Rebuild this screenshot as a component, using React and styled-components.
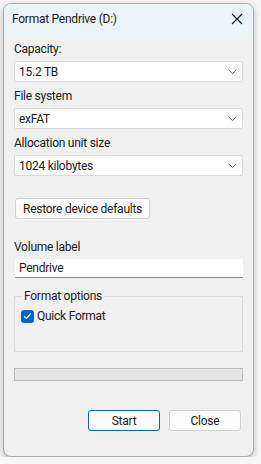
import React from "react";
import styled, { createGlobalStyle } from "styled-components";

const GlobalStyle = createGlobalStyle`
  html, body {
    margin: 0;
    padding: 0;
    background: #f7f7f7;
  }
  body {
    font-family: Roboto, "Noto Sans", sans-serif;
    font-size: 12px;
    letter-spacing: -0.25px;
    color: #1a1a1a;
  }
`;

const Chevron = () => (
  <svg width="9" height="6" viewBox="0 0 9 6" fill="none">
    <path d="M0.8 1 L4.5 4.6 L8.2 1" stroke="#5f5f5f" strokeWidth="1" />
  </svg>
);

const CloseIcon = () => (
  <svg width="12" height="12" viewBox="0 0 12 12" fill="none">
    <path d="M1 1 L11 11 M11 1 L1 11" stroke="#1a1a1a" strokeWidth="1.1" />
  </svg>
);

const Check = () => (
  <svg width="9" height="8" viewBox="0 0 9 8" fill="none">
    <path d="M1 4.2 L3.4 6.4 L8 1.4" stroke="#ffffff" strokeWidth="1.2" />
  </svg>
);

const Combo = ({ value }) => (
  <Select>
    <span>{value}</span>
    <Chevron />
  </Select>
);

const App = () => {
  return (
    <>
      <GlobalStyle />
      <Window>
        <TitleBar>
          <Title>Format Pendrive (D:)</Title>
          <CloseButton>
            <CloseIcon />
          </CloseButton>
        </TitleBar>
        <Body>
          <Label>Capacity:</Label>
          <Combo value="15.2 TB" />
          <Label>File system</Label>
          <Combo value="exFAT" />
          <Label>Allocation unit size</Label>
          <Combo value="1024 kilobytes" />
          <RestoreButton>Restore device defaults</RestoreButton>
          <Label $top={20}>Volume label</Label>
          <TextInput>Pendrive</TextInput>
          <GroupBox>
            <Legend>Format options</Legend>
            <CheckRow>
              <CheckBox>
                <Check />
              </CheckBox>
              Quick Format
            </CheckRow>
          </GroupBox>
          <Progress />
          <Footer>
            <DialogButton $primary>Start</DialogButton>
            <DialogButton>Close</DialogButton>
          </Footer>
        </Body>
      </Window>
    </>
  );
};

export default App;

const Window = styled.div`
  margin: 3px 0 0 3px;
  width: 249px;
  height: 452px;
  border: 1px solid #a9a9a9;
  border-radius: 8px;
  background: #f0f0f0;
  box-shadow: 0 2px 6px rgba(0, 0, 0, 0.25);
  overflow: hidden;
  display: flex;
  flex-direction: column;
`;

const TitleBar = styled.div`
  height: 30px;
  background: #eaf4f7;
  display: flex;
  align-items: center;
  justify-content: space-between;
  padding: 0 10px 0 8px;
`;

const Title = styled.div`
  font-size: 12px;
  color: #1a1a1a;
`;

const CloseButton = styled.div`
  width: 12px;
  height: 12px;
  display: flex;
`;

const Body = styled.div`
  padding: 7px 10px 0 10px;
  display: flex;
  flex-direction: column;
`;

const Label = styled.div`
  line-height: 16px;
  margin-top: ${(p) => (p.$top ? p.$top : 0)}px;
  margin-bottom: 4px;
`;

const Select = styled.div`
  height: 19px;
  background: #ffffff;
  border: 1px solid #d9d9d9;
  border-radius: 2px;
  display: flex;
  align-items: center;
  justify-content: space-between;
  padding: 0 5px 0 4px;
  margin-bottom: 6px;
`;

const RestoreButton = styled.div`
  align-self: flex-start;
  margin-top: 16px;
  margin-left: 1px;
  height: 19px;
  padding: 0 7px;
  display: flex;
  align-items: center;
  background: #fdfdfd;
  border: 1px solid #d0d0d0;
  border-radius: 3px;
`;

const TextInput = styled.div`
  height: 18px;
  margin-left: 1px;
  background: #ffffff;
  border-bottom: 1px solid #8a8a8a;
  display: flex;
  align-items: center;
  padding-left: 4px;
`;

const GroupBox = styled.fieldset`
  margin: 11px 0 0 0;
  padding: 0 6px 24px 6px;
  border: 1px solid #dcdcdc;
  height: 37px;
`;

const Legend = styled.legend`
  padding: 0 2px;
  margin-left: 1px;
  line-height: 14px;
`;

const CheckRow = styled.div`
  display: flex;
  align-items: center;
  gap: 3px;
  margin-top: 6px;
`;

const CheckBox = styled.div`
  width: 13px;
  height: 13px;
  border-radius: 3px;
  background: #0067c0;
  display: flex;
  align-items: center;
  justify-content: center;
`;

const Progress = styled.div`
  margin-top: 16px;
  height: 11px;
  background: #e6e6e6;
  border: 1px solid #bcbcbc;
`;

const Footer = styled.div`
  display: flex;
  justify-content: flex-end;
  gap: 9px;
  margin-top: 29px;
  padding-right: 2px;
`;

const DialogButton = styled.div`
  width: 70px;
  height: 19px;
  display: flex;
  align-items: center;
  justify-content: center;
  background: #fdfdfd;
  border: 1px solid ${(p) => (p.$primary ? "#0067c0" : "#d0d0d0")};
  border-radius: 3px;
`;
